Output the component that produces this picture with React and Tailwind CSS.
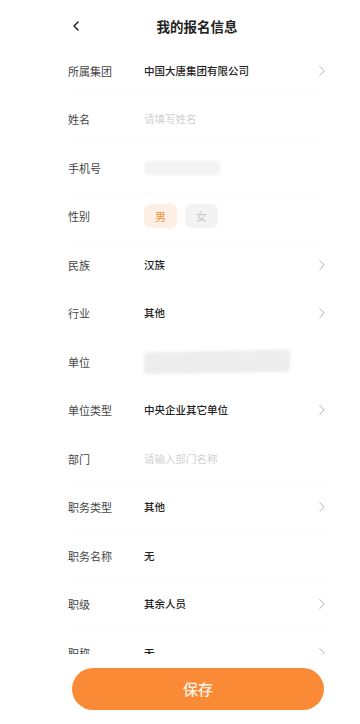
import React from 'react';
import { ChevronLeft, ChevronRight } from 'lucide-react';

const rows = [
    { label: '所属集团', value: '中国大唐集团有限公司', arrow: true },
    { label: '姓名', placeholder: '请填写姓名' },
    { label: '手机号', blur: 'phone' },
    { label: '性别', gender: true },
    { label: '民族', value: '汉族', arrow: true },
    { label: '行业', value: '其他', arrow: true },
    { label: '单位', blur: 'unit' },
    { label: '单位类型', value: '中央企业其它单位', arrow: true },
    { label: '部门', placeholder: '请输入部门名称' },
    { label: '职务类型', value: '其他', arrow: true },
    { label: '职务名称', value: '无' },
    { label: '职级', value: '其余人员', arrow: true },
    { label: '职称', value: '无', arrow: true },
];

function Row({ row }) {
    return (
        <div className="h-[48.5px] flex items-center border-b border-[#fcfcfc]">
            <div className="w-[76px] shrink-0 text-[11px] text-[#444]">{row.label}</div>
            <div className="flex-1 flex items-center">
                {row.value && <span className="text-[10.5px] font-medium text-[#222]">{row.value}</span>}
                {row.placeholder && <span className="text-[10.5px] text-[#d0d0d0]">{row.placeholder}</span>}
                {row.blur === 'phone' && <div className="w-[76px] h-[14px] bg-[#f3f3f3] rounded-sm blur-[1px]" />}
                {row.blur === 'unit' && <div className="w-[146px] h-[22px] bg-[#ededed] rounded-sm blur-[1.5px] -skew-y-1" />}
                {row.gender && (
                    <div className="flex gap-[8px]">
                        <span className="w-[33px] h-[24px] rounded-[7px] bg-[#fdefe3] text-[#f0913f] text-[11px] flex items-center justify-center">男</span>
                        <span className="w-[33px] h-[24px] rounded-[7px] bg-[#f3f3f3] text-[#c8c8c8] text-[11px] flex items-center justify-center">女</span>
                    </div>
                )}
            </div>
            {row.arrow && <ChevronRight size={18} strokeWidth={1.3} className="text-[#b0b0b0] mr-[-5px]" />}
        </div>
    );
}

export default function App() {
    return (
        <div className="w-[360px] h-[724px] bg-white overflow-hidden relative" style={{ fontFamily: '"Noto Sans CJK SC", "Noto Sans", sans-serif' }}>
            {/* header */}
            <div className="h-[47px] pt-[5px] pl-[68px] pr-[34px] flex items-center relative">
                <ChevronLeft size={16} strokeWidth={2.2} className="text-[#222]" />
                <div className="flex-1 text-center text-[13.5px] font-bold text-[#222]">我的报名信息</div>
                <div className="w-[16px]" />
            </div>

            <div className="pl-[68px] pr-[34px]">
                {rows.map((r) => <Row key={r.label} row={r} />)}
            </div>

            {/* footer */}
            <div className="absolute left-0 right-0 bottom-0 h-[70px] bg-white pl-[72px] pr-[36px] pt-[14px]">
                <button className="w-full h-[42px] rounded-full bg-[#fa8a36] text-[#fff3e6] text-[15px] font-medium">保存</button>
            </div>
        </div>
    );
}
